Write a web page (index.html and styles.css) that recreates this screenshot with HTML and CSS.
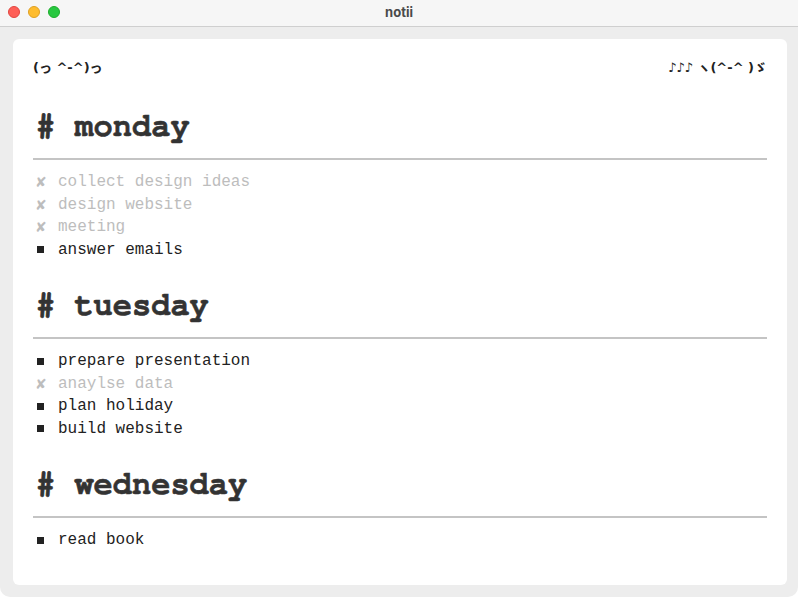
FILE: index.html
```html
<!DOCTYPE html>
<html>
<head>
<meta charset="utf-8">
<link rel="stylesheet" href="styles.css">
</head>
<body>
<div class="window">
  <header class="titlebar">
    <div class="lights">
      <span class="light red"></span>
      <span class="light yellow"></span>
      <span class="light green"></span>
    </div>
    <div class="title">notii</div>
  </header>
  <main class="frame">
    <section class="card">
      <div class="kaomoji">
        <span>(っ ^-^)っ</span>
        <span>♪♪♪ ヽ(^-^ )ゞ</span>
      </div>

      <h1 class="day"># monday</h1>
      <hr class="rule">
      <ul class="tasks">
        <li class="task done"><span class="mark">✘</span>collect design ideas</li>
        <li class="task done"><span class="mark">✘</span>design website</li>
        <li class="task done"><span class="mark">✘</span>meeting</li>
        <li class="task"><span class="mark"><i class="sq"></i></span>answer emails</li>
      </ul>

      <h1 class="day"># tuesday</h1>
      <hr class="rule">
      <ul class="tasks">
        <li class="task"><span class="mark"><i class="sq"></i></span>prepare presentation</li>
        <li class="task done"><span class="mark">✘</span>anaylse data</li>
        <li class="task"><span class="mark"><i class="sq"></i></span>plan holiday</li>
        <li class="task"><span class="mark"><i class="sq"></i></span>build website</li>
      </ul>

      <h1 class="day"># wednesday</h1>
      <hr class="rule">
      <ul class="tasks">
        <li class="task"><span class="mark"><i class="sq"></i></span>read book</li>
      </ul>
    </section>
  </main>
</div>
</body>
</html>
```

FILE: styles.css
```css
* { box-sizing: border-box; }
html, body { margin: 0; padding: 0; height: 100%; }
body {
  background: #ffffff;
  font-family: "Liberation Mono", "Courier New", monospace;
}
.window {
  height: 597px;
  display: flex;
  flex-direction: column;
  background: #ededed;
  border-radius: 0 0 10px 10px;
  overflow: hidden;
}
.titlebar {
  height: 27px;
  flex: none;
  background: #f6f6f6;
  border-bottom: 1px solid #cfcfcf;
  display: flex;
  align-items: center;
  position: relative;
}
.lights {
  display: flex;
  gap: 8px;
  padding-left: 8px;
  margin-top: -2px;
}
.light {
  width: 12px;
  height: 12px;
  border-radius: 50%;
  display: block;
}
.red { background: #fe5f57; border: 0.5px solid #e14640; }
.yellow { background: #febc2e; border: 0.5px solid #dfa023; }
.green { background: #28c840; border: 0.5px solid #1dad2b; }
.title {
  position: absolute;
  left: 0; right: 0;
  top: 4px;
  text-align: center;
  font-family: "Inter", "Liberation Sans", sans-serif;
  font-weight: 700;
  font-size: 13px;
  color: #4a4a4a;
}
.frame {
  flex: 1;
  padding: 12px 11px 12px 13px;
  display: flex;
}
.card {
  flex: 1;
  background: #ffffff;
  border-radius: 6px;
  padding: 20px 20px 0 20px;
}
.kaomoji {
  display: flex;
  justify-content: space-between;
  font-family: "DejaVu Sans", "Noto Sans CJK JP", sans-serif;
  font-weight: 700;
  font-size: 13px;
  line-height: 18px;
  height: 18px;
  color: #222;
}
.day {
  margin: 29px 0 0 0;
  font-family: "Nimbus Mono PS", "FreeMono", "Courier New", "Liberation Mono", monospace;
  font-weight: 700;
  font-size: 32px;
  line-height: 40px;
  height: 40px;
  color: #333;
  -webkit-text-stroke: 0.6px #333;
  padding-left: 3px;
}
.tasks + .day { margin-top: 24px; }
.rule {
  margin: 12px 0 0 0;
  border: 0;
  height: 2px;
  background: #c4c4c4;
}
.tasks {
  list-style: none;
  margin: 11px 0 0 0;
  padding: 0;
}
.task {
  display: flex;
  align-items: center;
  font-size: 16px;
  line-height: 22.5px;
  height: 22.5px;
  color: #222;
}
.task.done { color: #bdbdbd; }
.mark {
  width: 25px;
  flex: none;
  display: flex;
  align-items: center;
  padding-left: 2px;
  font-family: "DejaVu Sans", sans-serif;
  font-size: 14px;
}
.sq {
  display: block;
  width: 7px;
  height: 7px;
  background: #222;
  margin-left: 2px;
}
```
